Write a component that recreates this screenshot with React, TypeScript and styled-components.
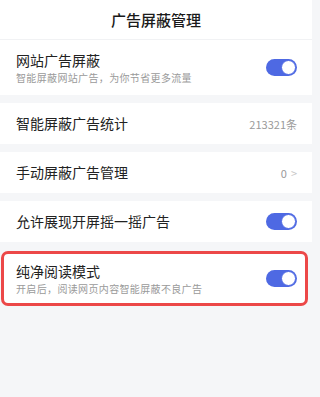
import React, { useState } from "react";
import styled, { createGlobalStyle } from "styled-components";

const GlobalStyle = createGlobalStyle`
  html, body {
    margin: 0;
    padding: 0;
    background: #f5f6f8;
  }
  body {
    font-family: "Noto Sans CJK SC", "Noto Sans", sans-serif;
    color: #222;
  }
`;

const Page = styled.div`
  width: 312px;
  min-height: 397px;
  background: #f5f6f8;
  display: flex;
  flex-direction: column;
`;

const Header = styled.div`
  height: 40px;
  background: #fff;
  display: flex;
  align-items: center;
  justify-content: center;
  font-size: 15px;
  font-weight: 500;
  color: #1a1a1a;
  border-bottom: 1px solid #f1f2f4;
  box-sizing: border-box;
`;

const List = styled.div`
  display: flex;
  flex-direction: column;
  gap: 8px;
`;

const Row = styled.div<{ $tall?: boolean; $highlight?: boolean }>`
  height: ${(p) => (p.$tall ? "55px" : "41px")};
  background: #fff;
  display: flex;
  align-items: center;
  justify-content: space-between;
  box-sizing: border-box;
  padding: 0 15px 0 16px;
  ${(p) =>
    p.$highlight &&
    `
    margin: 1px 4px 0 1px;
    padding: 0 8px 0 12px;
    border: 3px solid #ec4848;
    border-radius: 7px;
  `}
`;

const TextCol = styled.div`
  display: flex;
  flex-direction: column;
`;

const Title = styled.div`
  font-size: 14px;
  line-height: 19px;
  color: #222;
`;

const Sub = styled.div`
  font-size: 10px;
  line-height: 14px;
  color: #9a9a9a;
  margin-top: 1px;
  letter-spacing: 0.35px;
`;

const Value = styled.div`
  font-size: 11px;
  color: #9a9a9a;
  display: flex;
  align-items: center;
  gap: 4px;
`;

const Chevron = styled.span`
  font-size: 11px;
  color: #c8c8c8;
`;

const Track = styled.button<{ $on: boolean }>`
  width: 31px;
  height: 17px;
  border-radius: 9px;
  border: none;
  padding: 0;
  cursor: pointer;
  background: ${(p) => (p.$on ? "#4e69e3" : "#d9d9d9")};
  display: flex;
  align-items: center;
  justify-content: ${(p) => (p.$on ? "flex-end" : "flex-start")};
  flex-shrink: 0;
`;

const Thumb = styled.span`
  width: 15px;
  height: 15px;
  border-radius: 50%;
  background: #fff;
  box-sizing: border-box;
  border: 1px solid #4e69e3;
  margin: 0 1px;
`;

const Toggle: React.FC<{ initial?: boolean }> = ({ initial = true }) => {
  const [on, setOn] = useState(initial);
  return (
    <Track $on={on} onClick={() => setOn(!on)}>
      <Thumb />
    </Track>
  );
};

export default function App() {
  return (
    <Page>
      <GlobalStyle />
      <Header>广告屏蔽管理</Header>
      <List>
        <Row $tall>
          <TextCol>
            <Title>网站广告屏蔽</Title>
            <Sub>智能屏蔽网站广告，为你节省更多流量</Sub>
          </TextCol>
          <Toggle />
        </Row>
        <Row>
          <Title>智能屏蔽广告统计</Title>
          <Value>213321条</Value>
        </Row>
        <Row>
          <Title>手动屏蔽广告管理</Title>
          <Value>
            0<Chevron>&gt;</Chevron>
          </Value>
        </Row>
        <Row>
          <Title>允许展现开屏摇一摇广告</Title>
          <Toggle />
        </Row>
        <Row $tall $highlight>
          <TextCol>
            <Title>纯净阅读模式</Title>
            <Sub>开启后，阅读网页内容智能屏蔽不良广告</Sub>
          </TextCol>
          <Toggle />
        </Row>
      </List>
    </Page>
  );
}
